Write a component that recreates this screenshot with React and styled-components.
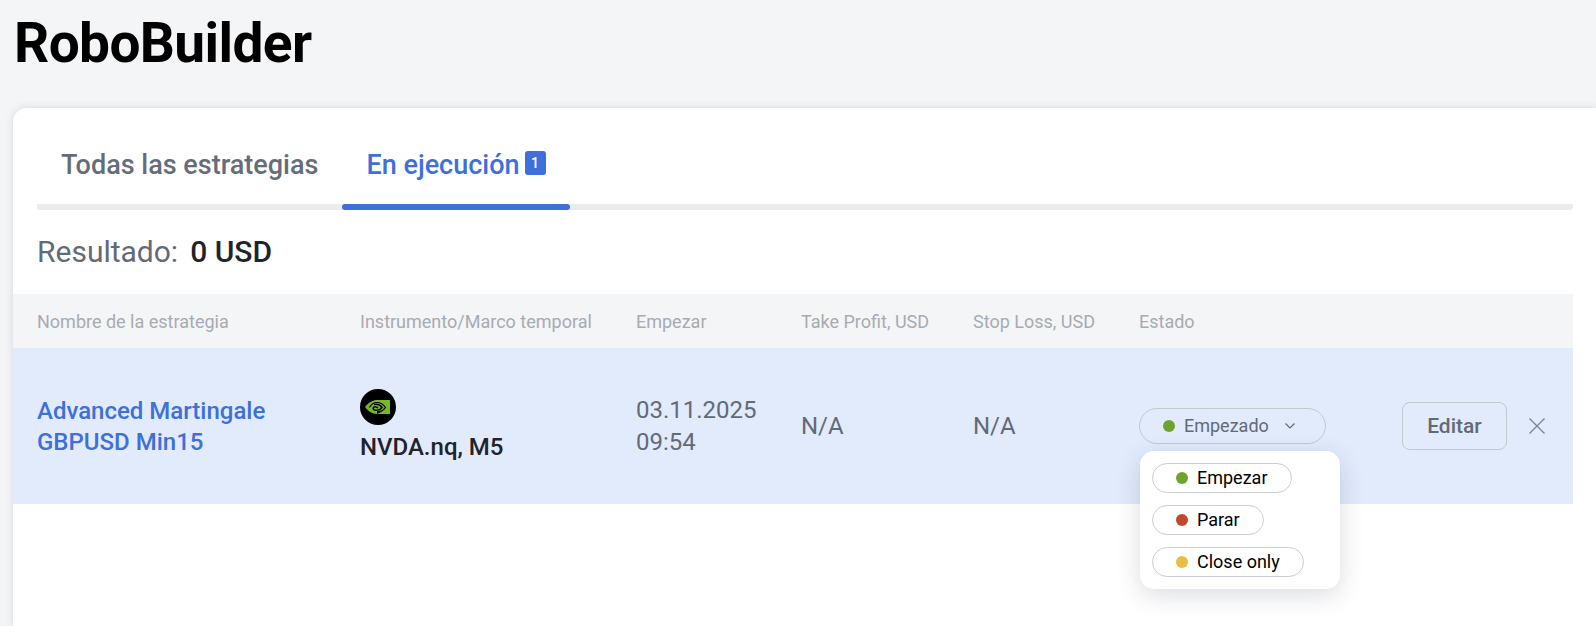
import styled, { createGlobalStyle } from "styled-components"

const GlobalStyle = createGlobalStyle`
    html, body {
        margin: 0;
        height: 100%;
        background: #f4f5f7;
        font-family: Roboto, "Liberation Sans", sans-serif;
        overflow: hidden;
    }
`
const Title = styled.h1`
    margin: 0;
    padding: 7px 0 0 14px;
    height: 108px;
    box-sizing: border-box;
    font-size: 55px;
    line-height: 72px;
    font-weight: 700;
    letter-spacing: -0.6px;
    color: #000;
`
const Card = styled.section`
    margin-left: 13px;
    height: 518px;
    padding: 0 23px 0 0;
    background: #fff;
    border-radius: 14px 0 0 0;
    box-shadow: 0 0 8px rgba(30, 40, 60, 0.14);
`
const Tabs = styled.div`
    display: flex;
    margin-left: 24px;
    height: 102px;
    padding-top: 31px;
    box-sizing: border-box;
    background: linear-gradient(#ebecee, #ebecee) left bottom / 100% 6px no-repeat;
    border-radius: 3px;
`
const Tab = styled.div`
    position: relative;
    display: flex;
    align-items: flex-start;
    gap: 5px;
    padding: 2px 24px 0;
    height: 71px;
    box-sizing: border-box;
    font-size: 27px;
    line-height: 48px;
    font-weight: 500;
    color: ${props => props.$active ? "#3f6fd8" : "#666d7a"};
    &::after {
        content: "";
        display: ${props => props.$active ? "block" : "none"};
        position: absolute;
        left: 0;
        right: 0;
        bottom: 0;
        height: 6px;
        border-radius: 3px;
        background: #3f6fd8;
    }
`
const Count = styled.span`
    margin-top: 10px;
    width: 21px;
    height: 24px;
    border-radius: 3px;
    background: #3f6fd8;
    color: #fff;
    font-size: 14px;
    line-height: 24px;
    text-align: center;
`
const Summary = styled.div`
    display: flex;
    align-items: baseline;
    gap: 12px;
    margin-left: 24px;
    height: 84px;
    padding-top: 19px;
    box-sizing: border-box;
    font-size: 30px;
    line-height: 46px;
    color: #636a77;
`
const SummaryValue = styled.strong`
    font-weight: 500;
    color: #1f232b;
`
const TableRow = styled.div`
    display: grid;
    grid-template-columns: 323px 276px 165px 172px 166px 263px 1fr;
    align-items: center;
    padding-left: 24px;
`
const HeadRow = styled(TableRow)`
    height: 54px;
    background: #f4f5f7;
    font-size: 18px;
    color: #a7abb3;
`
const BodyRow = styled(TableRow)`
    height: 156px;
    background: #e1ebfc;
    font-size: 24px;
    line-height: 32px;
    color: #636a77;
`
const StrategyName = styled.a`
    display: block;
    padding-top: 2px;
    color: #3f6fd8;
    font-weight: 500;
    line-height: 31px;
`
const Instrument = styled.div`
    display: flex;
    flex-direction: column;
    align-items: flex-start;
    gap: 6px;
    font-weight: 500;
    color: #1f232b;
`
const StatusCell = styled.div`
    position: relative;
`
const StatusPill = styled.button`
    display: flex;
    align-items: center;
    width: 187px;
    height: 36px;
    padding: 0 0 0 23px;
    box-sizing: border-box;
    border: 1px solid #c4c8cf;
    border-radius: 18px;
    background: transparent;
    font: inherit;
    font-size: 18px;
    color: #636a77;
`
const Dot = styled.span`
    flex: none;
    width: 12px;
    height: 12px;
    border-radius: 50%;
    margin-right: 9px;
    background: ${props => props.$color};
`
const Chevron = styled.svg`
    margin-left: 15px;
`
const Menu = styled.div`
    position: absolute;
    top: 43px;
    left: 1px;
    width: 200px;
    height: 138px;
    padding: 12px;
    box-sizing: border-box;
    display: flex;
    flex-direction: column;
    align-items: flex-start;
    gap: 12px;
    background: #fff;
    border-radius: 14px;
    box-shadow: 0 6px 24px rgba(30, 40, 60, 0.16);
    z-index: 2;
`
const MenuItem = styled.div`
    display: flex;
    align-items: center;
    height: 30px;
    padding: 0 23px 0 23px;
    box-sizing: border-box;
    border: 1px solid #c9ccd2;
    border-radius: 15px;
    font-size: 18px;
    color: #000;
`
const Actions = styled.div`
    display: flex;
    align-items: center;
    gap: 21px;
`
const EditButton = styled.button`
    width: 105px;
    height: 48px;
    border: 1px solid #c4c8cf;
    border-radius: 8px;
    background: transparent;
    font: inherit;
    font-size: 21px;
    font-weight: 500;
    color: #636a77;
`

const NvidiaLogo = () => (
    <svg width="36" height="36" viewBox="0 0 36 36">
        <circle cx="18" cy="18" r="18" fill="#000" />
        <rect x="16" y="11" width="14" height="14" fill="#76b82a" />
        <path d="M5 18C9 13 13 11 17 11V25C12 25 8 22 5 18Z" fill="#76b82a" />
        <path d="M17 25V22C21 22 23 21 25 19.5L17 25Z" fill="#000" />
        <path d="M14 15.5C17.5 14.8 20.5 16 22 18.5C20 21 16.5 21.7 14 20.7C12.5 19.8 13 17.7 15 17.7C16.5 17.7 17.3 18.3 17.8 19" fill="none" stroke="#000" strokeWidth="1.5" />
        <path d="M9.5 18.5C11 15.5 13.5 13.5 17 13.5C21 13.5 23.5 15.5 25.5 18.5C24 20.5 21 23 17.5 24" fill="none" stroke="#000" strokeWidth="1.2" />
    </svg>
)

const App = () => {
    const options = [
        { label: "Empezar", color: "#6fa32f" },
        { label: "Parar", color: "#c0492b" },
        { label: "Close only", color: "#eabd45" },
    ]

    return (
        <>
            <GlobalStyle />
            <Title>RoboBuilder</Title>
            <Card>
                <Tabs>
                    <Tab>Todas las estrategias</Tab>
                    <Tab $active>En ejecución<Count>1</Count></Tab>
                </Tabs>
                <Summary>Resultado: <SummaryValue>0 USD</SummaryValue></Summary>
                <HeadRow>
                    <div>Nombre de la estrategia</div>
                    <div>Instrumento/Marco temporal</div>
                    <div>Empezar</div>
                    <div>Take Profit, USD</div>
                    <div>Stop Loss, USD</div>
                    <div>Estado</div>
                    <div />
                </HeadRow>
                <BodyRow>
                    <StrategyName>Advanced Martingale<br />GBPUSD Min15</StrategyName>
                    <Instrument>
                        <NvidiaLogo />
                        NVDA.nq, M5
                    </Instrument>
                    <div>03.11.2025<br />09:54</div>
                    <div>N/A</div>
                    <div>N/A</div>
                    <StatusCell>
                        <StatusPill>
                            <Dot $color="#6fa32f" />
                            Empezado
                            <Chevron width="12" height="8" viewBox="0 0 12 8" fill="none" stroke="#636a77" strokeWidth="1.2">
                                <path d="M1.5 1.5L6 6L10.5 1.5" />
                            </Chevron>
                        </StatusPill>
                        <Menu>
                            {options.map(option => (
                                <MenuItem key={option.label}>
                                    <Dot $color={option.color} />
                                    {option.label}
                                </MenuItem>
                            ))}
                        </Menu>
                    </StatusCell>
                    <Actions>
                        <EditButton>Editar</EditButton>
                        <svg width="18" height="18" viewBox="0 0 18 18" fill="none" stroke="#7d838e" strokeWidth="1.3">
                            <path d="M1.5 1.5L16.5 16.5M16.5 1.5L1.5 16.5" />
                        </svg>
                    </Actions>
                </BodyRow>
            </Card>
        </>
    )
}

export default App
